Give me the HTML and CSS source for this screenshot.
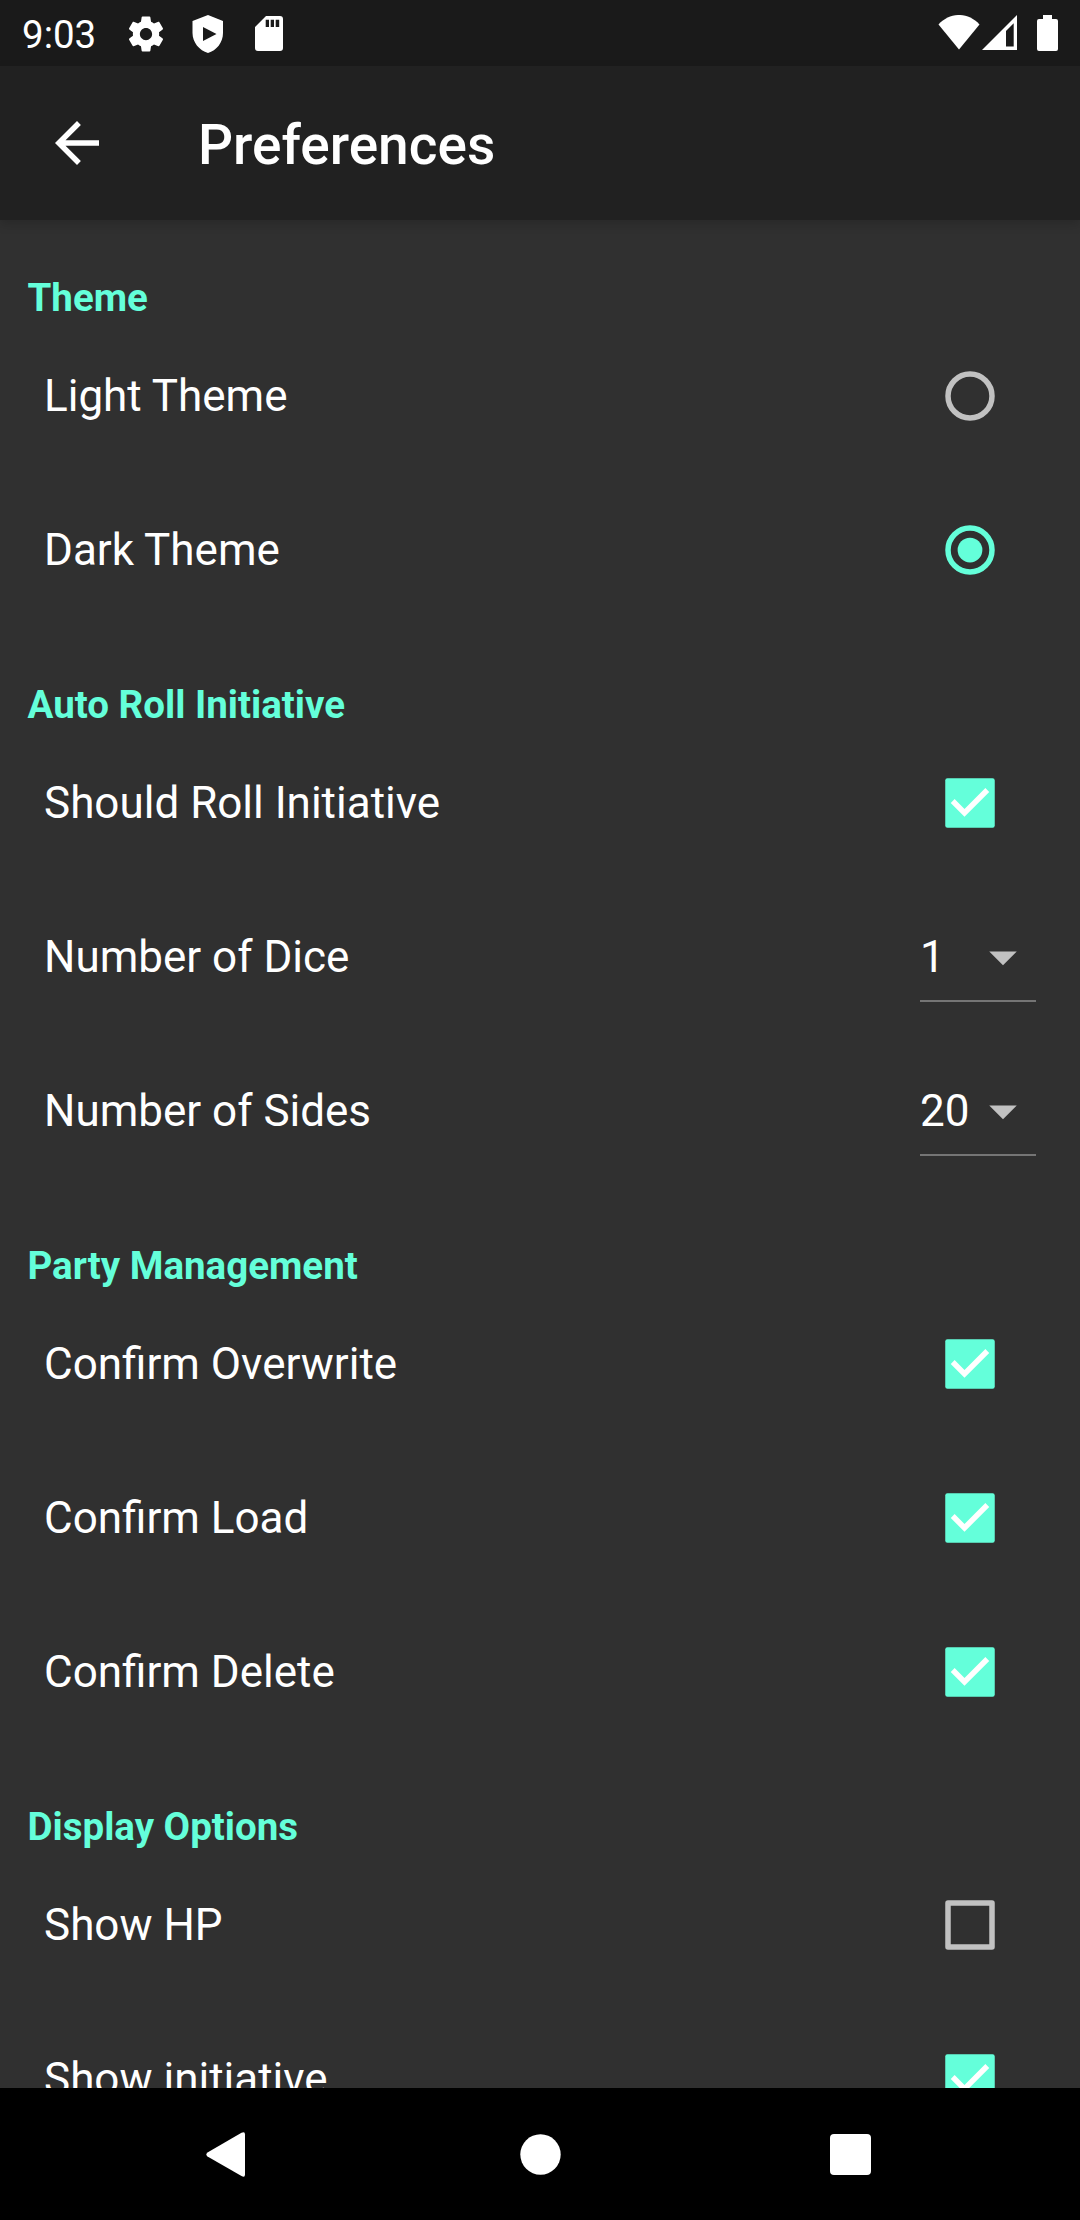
FILE: index.html
```html
<!DOCTYPE html>
<html lang="en">
<head>
<meta charset="utf-8">
<title>Preferences</title>
<link rel="stylesheet" href="styles.css">
</head>
<body>
<svg class="defs" aria-hidden="true">
  <symbol id="check-on" viewBox="0 0 24 24">
    <rect x="3" y="3" width="18" height="18" rx="0.8" fill="#64ffda"/>
    <path d="M10 17L5 12l1.41-1.41L10 14.17l7.59-7.59L19 8z" fill="#fff"/>
  </symbol>
  <symbol id="check-off" viewBox="0 0 24 24">
    <rect x="4" y="4" width="16" height="16" fill="none" stroke="#c1c1c1" stroke-width="2" stroke-linejoin="round"/>
  </symbol>
  <symbol id="caret" viewBox="0 0 24 24">
    <path d="M7 10l5 5 5-5z" fill="#c1c1c1"/>
  </symbol>
</svg>
<div class="screen">
  <header class="status">
    <span class="clock">9:03</span>
    <svg class="gear" width="42" height="42" viewBox="0 0 24 24"><path d="M19.43 12.98c.04-.32.07-.64.07-.98s-.03-.66-.07-.98l2.11-1.65c.19-.15.24-.42.12-.64l-2-3.46c-.12-.22-.39-.3-.61-.22l-2.49 1c-.52-.4-1.08-.73-1.69-.98l-.38-2.65C14.46 2.18 14.25 2 14 2h-4c-.25 0-.46.18-.49.42l-.38 2.65c-.61.25-1.17.59-1.69.98l-2.49-1c-.23-.09-.49 0-.61.22l-2 3.46c-.13.22-.07.49.12.64l2.11 1.65c-.04.32-.07.65-.07.98s.03.66.07.98l-2.11 1.65c-.19.15-.24.42-.12.64l2 3.46c.12.22.39.3.61.22l2.49-1c.52.4 1.08.73 1.69.98l.38 2.65c.03.24.24.42.49.42h4c.25 0 .46-.18.49-.42l.38-2.65c.61-.25 1.17-.59 1.69-.98l2.49 1c.23.09.49 0 .61-.22l2-3.46c.12-.22.07-.49-.12-.64l-2.11-1.65zM12 15.5c-1.93 0-3.5-1.57-3.5-3.5s1.57-3.5 3.5-3.5 3.5 1.57 3.5 3.5-1.57 3.5-3.5 3.5z"/></svg>
    <svg class="shield" width="32" height="38" viewBox="0 0 32 38"><path fill-rule="evenodd" d="M16 0L31 6V18C31 27.500 24.500 35.500 16 38C7.500 35.500 .5 27.500 .5 18V6ZM11 12V26L24.500 19Z"/></svg>
    <svg class="card" width="28" height="35" viewBox="0 0 28 35"><path fill-rule="evenodd" d="M11 0H25a3 3 0 0 1 3 3V32a3 3 0 0 1-3 3H3a3 3 0 0 1-3-3V11ZM10.700 3.700V11H14V3.700ZM15.700 3.700V11H19V3.700ZM20.700 3.700V11H24.200V3.700Z"/></svg>
    <svg class="wifi" width="42" height="35" viewBox="0 0 42 35"><path d="M.5 9.500C12-3.200 30-3.200 41.500 9.500L21 34.500Z"/></svg>
    <svg class="signal" width="35" height="35" viewBox="0 0 35 35"><path fill-rule="evenodd" d="M35 0V35H0ZM24 16V31.500H31.700V8.300Z"/></svg>
    <svg class="battery" width="21" height="36" viewBox="0 0 21 36"><path d="M6 0H15V4H19a2 2 0 0 1 2 2V34a2 2 0 0 1-2 2H2a2 2 0 0 1-2-2V6a2 2 0 0 1 2-2H6Z"/></svg>
  </header>
  <div class="toolbar">
    <svg width="66" height="66" viewBox="0 0 24 24"><path d="M20 11H7.830l5.590-5.590L12 4l-8 8 8 8 1.410-1.410L7.830 13H20z"/></svg>
    <h1>Preferences</h1>
  </div>
  <main class="content">
    <h2 class="first">Theme</h2>
    <div class="row"><span>Light Theme</span><svg class="box" viewBox="0 0 24 24"><circle cx="12" cy="12" r="8" fill="none" stroke="#c1c1c1" stroke-width="2"/></svg></div>
    <div class="row"><span>Dark Theme</span><svg class="box" viewBox="0 0 24 24"><circle cx="12" cy="12" r="8" fill="none" stroke="#64ffda" stroke-width="2"/><circle cx="12" cy="12" r="4.500" fill="#64ffda"/></svg></div>

    <h2>Auto Roll Initiative</h2>
    <div class="row"><span>Should Roll Initiative</span><svg class="box"><use href="#check-on"/></svg></div>
    <div class="row"><span>Number of Dice</span><div class="spinner"><span>1</span><svg><use href="#caret"/></svg></div></div>
    <div class="row"><span>Number of Sides</span><div class="spinner"><span>20</span><svg><use href="#caret"/></svg></div></div>

    <h2>Party Management</h2>
    <div class="row"><span>Confirm Overwrite</span><svg class="box"><use href="#check-on"/></svg></div>
    <div class="row"><span>Confirm Load</span><svg class="box"><use href="#check-on"/></svg></div>
    <div class="row"><span>Confirm Delete</span><svg class="box"><use href="#check-on"/></svg></div>

    <h2>Display Options</h2>
    <div class="row"><span>Show HP</span><svg class="box"><use href="#check-off"/></svg></div>
    <div class="row"><span>Show initiative</span><svg class="box"><use href="#check-on"/></svg></div>
  </main>
  <nav class="navbar">
    <svg width="40" height="45" viewBox="0 0 40 45"><path d="M35.500 .8Q39 -1 39 2.500V42.500Q39 46 35.500 44L1.500 24.500Q-.8 22.500 1.500 20.500Z"/></svg>
    <svg class="home" width="41" height="41" viewBox="0 0 41 41"><circle cx="20.500" cy="20.500" r="20.200"/></svg>
    <svg width="41" height="41" viewBox="0 0 41 41"><rect width="41" height="41" rx="4"/></svg>
  </nav>
</div>
</body>
</html>
```
FILE: styles.css
```css
* {
  box-sizing: border-box;
}

body {
  margin: 0;
  background: #303030;
  color: #fff;
  font-family: Roboto, sans-serif;
}

svg {
  display: block;
  flex: none;
  fill: #fff;
}

.defs {
  display: none;
}

.screen {
  display: flex;
  flex-direction: column;
  width: 1080px;
  height: 2220px;
  overflow: hidden;
}

.status {
  display: flex;
  flex: none;
  align-items: flex-start;
  height: 66px;
  padding: 15px 22px 0;
  background: #1a1a1a;
}

.clock {
  width: 103px;
  margin-top: -3px;
  font-size: 38.5px;
  line-height: 45px;
}

.gear {
  margin-top: -2px;
}

.shield {
  margin-left: 24.500px;
}

.card {
  margin: 1px 0 0 31px;
}

.wifi {
  margin-left: auto;
}

.signal {
  margin-left: 2px;
}

.battery {
  margin-left: 20px;
}

.toolbar {
  position: relative;
  display: flex;
  flex: none;
  align-items: center;
  gap: 88px;
  height: 154px;
  padding-left: 44px;
  background: #212121;
  box-shadow: 0 4px 10px rgba(0, 0, 0, 0.17);
}

h1 {
  margin: 4px 0 0;
  font-size: 55px;
  font-weight: 500;
  line-height: 64px;
}

.content {
  flex: 1;
  min-height: 0;
  overflow: hidden;
}

h2 {
  height: 99px;
  margin: 0;
  padding: 55px 27.500px 0;
  color: #64ffda;
  font-size: 38.5px;
  font-weight: 700;
  line-height: 45px;
}

.row {
  display: flex;
  align-items: center;
  justify-content: space-between;
  height: 154px;
  padding: 0 44px;
  font-size: 44px;
}

.box {
  width: 66px;
  height: 66px;
  margin-right: 33px;
}

.spinner {
  display: flex;
  align-items: center;
  justify-content: space-between;
  width: 116px;
  height: 90px;
  padding-top: 2px;
  border-bottom: 2px solid #757575;
}

.spinner svg {
  width: 66px;
  height: 66px;
}

.navbar {
  display: flex;
  flex: none;
  align-items: center;
  justify-content: space-between;
  height: 132px;
  padding: 0 209px 0 206px;
  background: #000;
}

.home {
  margin-left: 4px;
}
```
